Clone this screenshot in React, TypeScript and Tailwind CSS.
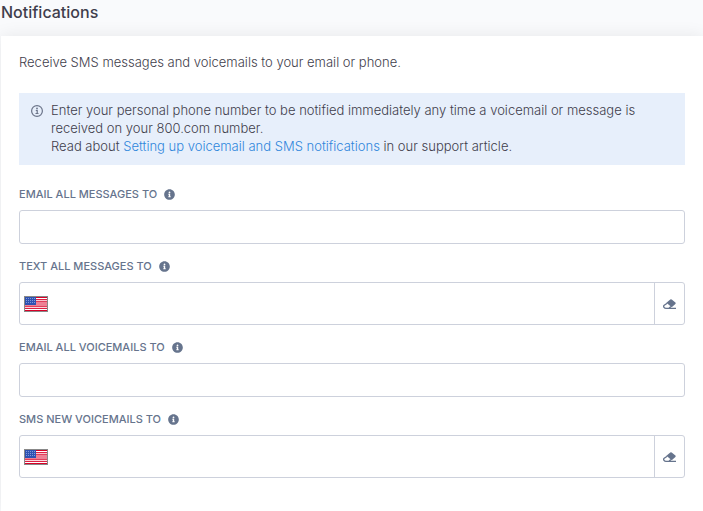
import { FaInfoCircle } from "react-icons/fa";

const fields = [
  { id: "email-messages", label: "Email all messages to", type: "email" },
  { id: "text-messages", label: "Text all messages to", type: "tel" },
  { id: "email-voicemails", label: "Email all voicemails to", type: "email" },
  { id: "sms-voicemails", label: "SMS new voicemails to", type: "tel" },
];

function InfoOutline() {
  return (
    <svg
      viewBox="0 0 12 12"
      className="mt-1 h-3 w-3 shrink-0 text-[#6b7489]"
      fill="none"
      stroke="currentColor"
      aria-hidden="true"
    >
      <circle cx="6" cy="6" r="5.4" strokeWidth="1.2" />
      <path d="M4.8 5.5h1.4v3" strokeWidth="1.2" />
      <path d="M4.5 8.5h3" strokeWidth="1" />
      <circle cx="6" cy="3.5" r="0.9" fill="currentColor" stroke="none" />
    </svg>
  );
}

function Eraser() {
  return (
    <svg
      viewBox="0 0 13 10"
      className="h-[10px] w-[13px]"
      fill="none"
      stroke="currentColor"
      strokeWidth="1.3"
      aria-hidden="true"
    >
      <path
        d="M3.4 3.8L7.3 0.4Q8 -0.1 8.7 0.5L12.4 3.6Q13 4.2 12.4 4.9L8.7 8.2Z"
        fill="currentColor"
        stroke="none"
      />
      <path d="M4.2 4.2L1.2 6.3Q0.2 7.2 1 8.3Q1.7 9.3 3 9.3H13M7.9 7.5L6 9.2" />
    </svg>
  );
}

function UsFlag() {
  return (
    <svg
      viewBox="0 0 24 16"
      className="h-4 w-6 shrink-0"
      shapeRendering="crispEdges"
      aria-hidden="true"
    >
      <rect width="24" height="16" fill="#888888" />
      <rect x="1" y="1" width="22" height="14" fill="#ffffff" />
      <rect x="1" y="1" width="22" height="1" fill="#d80027" />
      <rect x="1" y="3" width="22" height="1" fill="#dc1f42" />
      <rect x="1" y="4" width="22" height="1" fill="#f9c5ce" />
      <rect x="1" y="5" width="22" height="1" fill="#e0405c" />
      <rect x="1" y="6" width="22" height="4" fill="#ee8094" />
      <rect x="1" y="10" width="22" height="1" fill="#e0405c" />
      <rect x="1" y="11" width="22" height="1" fill="#fbd5db" />
      <rect x="1" y="12" width="22" height="1" fill="#dc1f42" />
      <rect x="1" y="14" width="22" height="1" fill="#d80027" />
      <rect x="1" y="1" width="11" height="8" fill="#2e52b2" />
      <path
        d="M2 2.5h9M2 4.5h9M2 6.5h9"
        stroke="#7f98d8"
        strokeDasharray="1 1"
      />
    </svg>
  );
}

export default function App() {
  return (
    <div className="min-h-screen bg-[#f9fafc] font-['Inter',sans-serif] text-[#3f3e4c]">
      <h1 className="px-px pt-px pb-3 text-base leading-[23px] font-medium">
        Notifications
      </h1>

      <main className="ml-px min-h-[475px] bg-white px-[18px] pt-[17px] pb-8 text-[13px] leading-[18px] font-light shadow-[0_0_16px_rgba(0,0,0,0.08)]">
        <p>Receive SMS messages and voicemails to your email or phone.</p>

        <div className="mt-[22px] flex gap-2 bg-[#e7effb] px-3 pt-2 pb-[10px]">
          <InfoOutline />
          <p>
            Enter your personal phone number to be notified immediately any time
            a voicemail or message is
            <br />
            received on your 800.com number.
            <br />
            Read about{" "}
            <a href="#support" className="text-[#2f86dc]">
              Setting up voicemail and SMS notifications
            </a>{" "}
            in our support article.
          </p>
        </div>

        <form className="mt-5 flex flex-col gap-[13px]">
          {fields.map((field) => (
            <div key={field.id}>
              <div className="mb-[7px] flex items-center gap-[7px] text-[11px] text-[#66748d]">
                <label htmlFor={field.id} className="font-medium uppercase">
                  {field.label}
                </label>
                <FaInfoCircle className="h-[11px] w-[11px]" />
              </div>
              {field.type === "tel" ? (
                <div className="flex h-[43px] rounded-[3px] border border-[#cdd1dc]">
                  <div className="flex flex-1 items-center gap-2 pl-1">
                    <UsFlag />
                    <input
                      id={field.id}
                      type="tel"
                      className="h-full min-w-0 flex-1 outline-none"
                    />
                  </div>
                  <button
                    type="button"
                    aria-label="Clear number"
                    className="flex w-[30px] items-center justify-center border-l border-[#cdd1dc] text-[#66748d]"
                  >
                    <Eraser />
                  </button>
                </div>
              ) : (
                <input
                  id={field.id}
                  type="email"
                  className="block h-[34px] w-full rounded-[3px] border border-[#cdd1dc] px-3 outline-none"
                />
              )}
            </div>
          ))}
        </form>
      </main>
    </div>
  );
}
